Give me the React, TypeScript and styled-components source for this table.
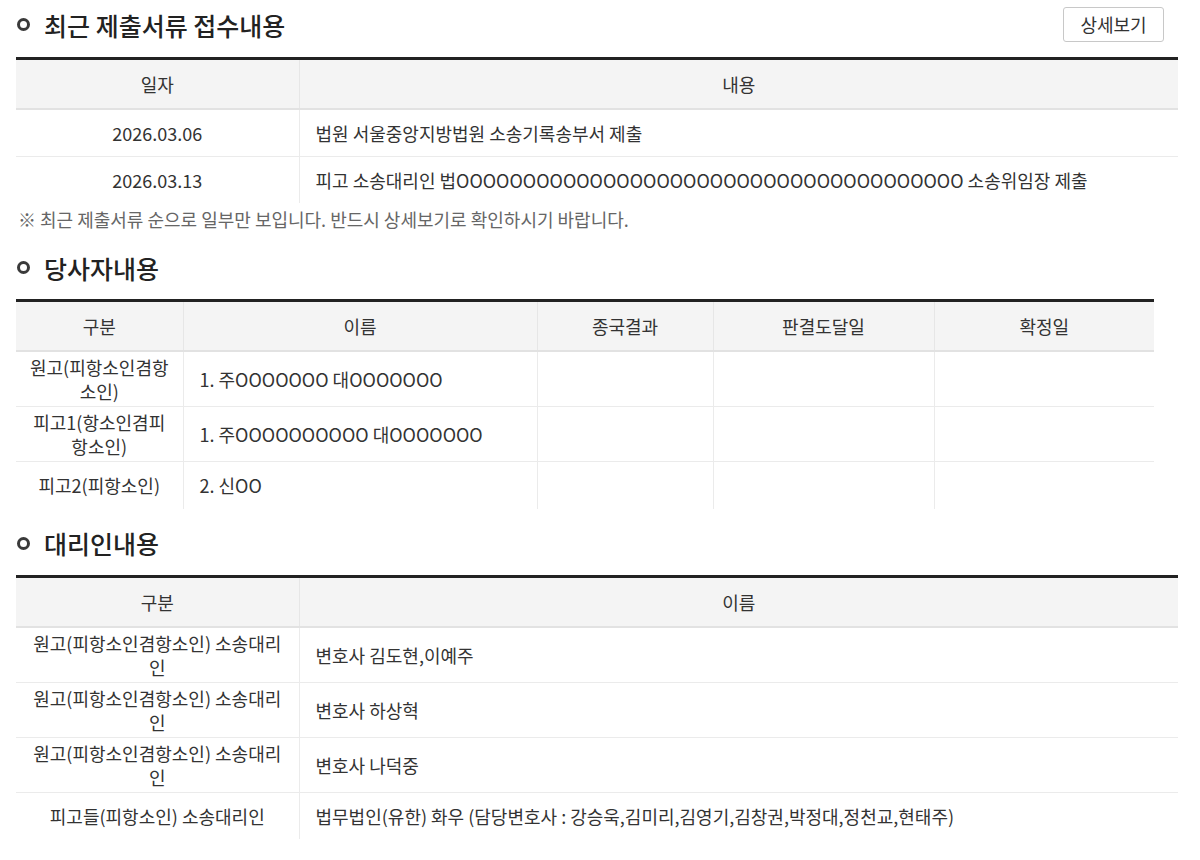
import React from "react";
import styled, { createGlobalStyle } from "styled-components";

const Global = createGlobalStyle`
  html, body { margin: 0; padding: 0; background: #fff; }
  body {
    font-family: "Noto Sans CJK KR", "Noto Sans", sans-serif;
    color: #333;
    font-size: 18px;
  }
`;

const Page = styled.div`
  padding: 0 22px 0 16px;
  display: flex;
  flex-direction: column;
`;

const Section = styled.section<{ $gap: number }>`
  display: flex;
  flex-direction: column;
  margin-bottom: ${(p) => p.$gap}px;
`;

const TitleBar = styled.div<{ $mb: number }>`
  display: flex;
  align-items: center;
  justify-content: space-between;
  height: 49px;
  margin-bottom: ${(p) => p.$mb}px;
`;

const Title = styled.h2`
  margin: 0;
  display: flex;
  align-items: center;
  gap: 14px;
  font-size: 25px;
  font-weight: 500;
  color: #222;
  line-height: 30px;
`;

const Bullet = styled.span`
  width: 13px;
  height: 13px;
  box-sizing: border-box;
  border: 3px solid #3a3a3a;
  border-radius: 50%;
  margin-left: 1px;
`;

const DetailButton = styled.button`
  font-family: inherit;
  font-size: 18px;
  color: #333;
  background: #fff;
  border: 1px solid #c8c8c8;
  border-radius: 3px;
  width: 101px;
  height: 35px;
  padding: 0;
  margin: 0 14px 1px 0;
  cursor: pointer;
`;

const Table = styled.table<{ $w: number }>`
  width: ${(p) => p.$w}px;
  border-collapse: collapse;
  border-top: 3px solid #222;
  table-layout: fixed;
`;

const Th = styled.th`
  background: #f4f4f4;
  font-weight: 400;
  color: #333;
  height: 48px;
  padding: 0;
  line-height: 24px;
  border-bottom: 2px solid #e2e2e2;
  border-left: 1px solid #e6e6e6;
  &:first-child { border-left: none; }
`;

const Td = styled.td<{ $center?: boolean }>`
  height: 47px;
  padding: 3px 16px;
  line-height: 24px;
  text-align: ${(p) => (p.$center ? "center" : "left")};
  border-bottom: 1px solid #ebebeb;
  border-left: 1px solid #ebebeb;
  vertical-align: middle;
  box-sizing: border-box;
  &:first-child { border-left: none; padding: 3px 12px; }
  tr:last-child > & { border-bottom: none; }
`;

const Note = styled.p`
  margin: 4px 0 0 2px;
  font-size: 18px;
  color: #666;
  line-height: 24px;
`;

const docs = [
  { date: "2026.03.06", text: "법원 서울중앙지방법원 소송기록송부서 제출" },
  {
    date: "2026.03.13",
    text: "피고 소송대리인 법" + "O".repeat(38) + " 소송위임장 제출",
  },
];

const parties = [
  { kind: "원고(피항소인겸항소인)", name: "1. 주OOOOOOO 대OOOOOOO" },
  { kind: "피고1(항소인겸피항소인)", name: "1. 주OOOOOOOOOO 대OOOOOOO" },
  { kind: "피고2(피항소인)", name: "2. 신OO" },
];

const agents = [
  { kind: "원고(피항소인겸항소인) 소송대리인", name: "변호사 김도현,이예주" },
  { kind: "원고(피항소인겸항소인) 소송대리인", name: "변호사 하상혁" },
  { kind: "원고(피항소인겸항소인) 소송대리인", name: "변호사 나덕중" },
  {
    kind: "피고들(피항소인) 소송대리인",
    name: "법무법인(유한) 화우 (담당변호사 : 강승욱,김미리,김영기,김창권,박정대,정천교,현태주)",
  },
];

export default function App() {
  return (
    <Page>
      <Global />
      <Section $gap={12}>
        <TitleBar $mb={8}>
          <Title>
            <Bullet />
            최근 제출서류 접수내용
          </Title>
          <DetailButton>상세보기</DetailButton>
        </TitleBar>
        <Table $w={1162}>
          <colgroup>
            <col style={{ width: 283 }} />
            <col />
          </colgroup>
          <thead>
            <tr>
              <Th>일자</Th>
              <Th>내용</Th>
            </tr>
          </thead>
          <tbody>
            {docs.map((d) => (
              <tr key={d.date}>
                <Td $center>{d.date}</Td>
                <Td>{d.text}</Td>
              </tr>
            ))}
          </tbody>
        </Table>
        <Note>※ 최근 제출서류 순으로 일부만 보입니다. 반드시 상세보기로 확인하시기 바랍니다.</Note>
      </Section>

      <Section $gap={10}>
        <TitleBar $mb={7}>
          <Title>
            <Bullet />
            당사자내용
          </Title>
        </TitleBar>
        <Table $w={1138}>
          <colgroup>
            <col style={{ width: 167 }} />
            <col style={{ width: 354 }} />
            <col style={{ width: 176 }} />
            <col style={{ width: 221 }} />
            <col />
          </colgroup>
          <thead>
            <tr>
              <Th>구분</Th>
              <Th>이름</Th>
              <Th>종국결과</Th>
              <Th>판결도달일</Th>
              <Th>확정일</Th>
            </tr>
          </thead>
          <tbody>
            {parties.map((p) => (
              <tr key={p.kind}>
                <Td $center>{p.kind}</Td>
                <Td>{p.name}</Td>
                <Td />
                <Td />
                <Td />
              </tr>
            ))}
          </tbody>
        </Table>
      </Section>

      <Section $gap={0}>
        <TitleBar $mb={7}>
          <Title>
            <Bullet />
            대리인내용
          </Title>
        </TitleBar>
        <Table $w={1162}>
          <colgroup>
            <col style={{ width: 283 }} />
            <col />
          </colgroup>
          <thead>
            <tr>
              <Th>구분</Th>
              <Th>이름</Th>
            </tr>
          </thead>
          <tbody>
            {agents.map((a, i) => (
              <tr key={i}>
                <Td $center>{a.kind}</Td>
                <Td>{a.name}</Td>
              </tr>
            ))}
          </tbody>
        </Table>
      </Section>
    </Page>
  );
}
